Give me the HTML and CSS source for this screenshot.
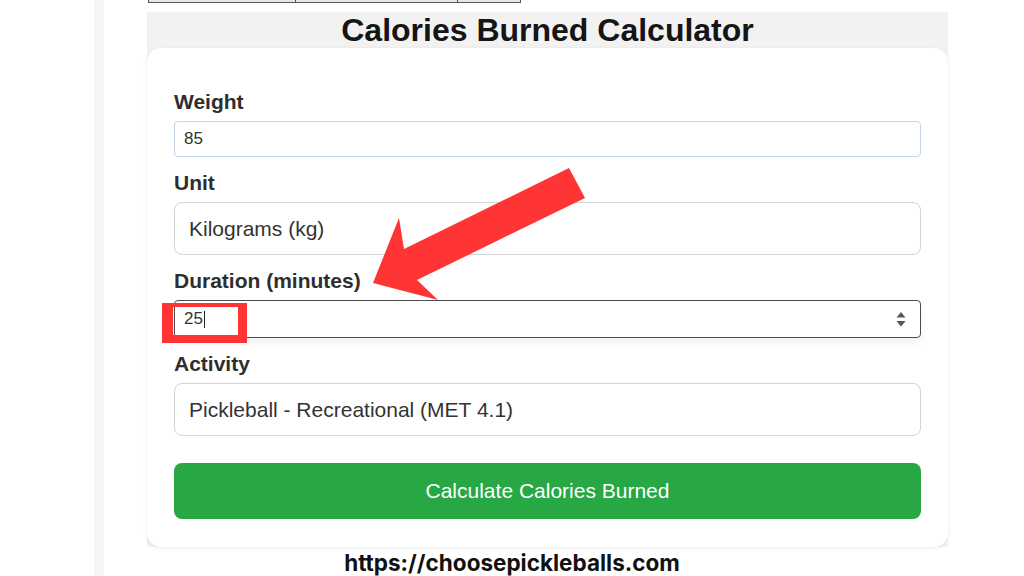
FILE: index.html
```html
<!DOCTYPE html>
<html lang="en">
<head>
<meta charset="utf-8">
<title>Calories Burned Calculator</title>
<link rel="stylesheet" href="styles.css">
</head>
<body>
  <div class="tabs">
    <span class="tab tab-a"></span>
    <span class="tab tab-b"></span>
    <span class="tab tab-c"></span>
  </div>

  <section class="panel">
    <h1 class="title">Calories Burned Calculator</h1>
    <form class="card">
      <div class="field">
        <label class="label">Weight</label>
        <div class="control control-weight">85</div>
      </div>
      <div class="field">
        <label class="label">Unit</label>
        <div class="control control-select">Kilograms (kg)</div>
      </div>
      <div class="field">
        <label class="label">Duration (minutes)</label>
        <div class="control control-focus">
          <span class="value">25</span><span class="caret"></span>
          <svg class="spinner" width="10" height="15" viewBox="0 0 10 15">
            <path d="M5 0 L9.5 5.5 L0.5 5.5 Z" fill="#555"/>
            <path d="M0.5 9 L9.5 9 L5 14.5 Z" fill="#555"/>
          </svg>
        </div>
      </div>
      <div class="field field-last">
        <label class="label">Activity</label>
        <div class="control control-select">Pickleball - Recreational (MET 4.1)</div>
      </div>
      <button class="submit" type="button">Calculate Calories Burned</button>
    </form>
  </section>

  <p class="site">https://choosepickleballs.com</p>

  <!-- annotation layer: pointer arrow and highlight box -->
  <svg class="marks" width="1024" height="576" viewBox="0 0 1024 576">
    <polygon fill="#ff3434" points="569,168 585,198 417,280 438,300 373,283 399,218 404,249"/>
    <path fill="#ff3434" fill-rule="evenodd" d="M162 303 H247 V343 H162 Z M173 307 V335 H238 V307 Z"/>
  </svg>
</body>
</html>
```

FILE: styles.css
```css
html, body {
  margin: 0;
  padding: 0;
}

body {
  width: 1024px;
  height: 576px;
  overflow: hidden;
  position: relative;
  font-family: "Liberation Sans", Arial, sans-serif;
  background: linear-gradient(to right, #fff 94px, #f6f6f6 94px, #f6f6f6 104px, #fff 104px);
}

/* cut-off tab strip at the very top */
.tabs {
  display: flex;
  margin-left: 148px;
  width: 373px;
  height: 3px;
  box-sizing: border-box;
  border: 1px solid #555;
  border-top: 0;
  background: #e6e6e6;
}

.tab { display: block; height: 100%; }
.tab-a { width: 146px; }
.tab-b { width: 161px; border-left: 1px solid #555; }
.tab-c { flex: 1; border-left: 1px solid #555; }

.panel {
  margin: 9px 0 0 147px;
  width: 801px;
  background: #f2f2f2;
}

.title {
  margin: 0;
  height: 36px;
  font-size: 32px;
  line-height: 36px;
  font-weight: 700;
  text-align: center;
  color: #151515;
}

.card {
  display: block;
  background: #fff;
  border-radius: 14px;
  padding: 42px 27px 28px;
  box-shadow: 0 1px 4px rgba(0, 0, 0, 0.08);
}

.field {
  margin-bottom: 14px;
}

.field-last {
  margin-bottom: 27px;
}

.label {
  display: block;
  font-size: 21px;
  line-height: 24px;
  font-weight: 700;
  color: #2e2e2e;
  margin-bottom: 7px;
}

.control {
  display: flex;
  align-items: center;
  box-sizing: border-box;
  width: 100%;
  color: #333;
  background: #fff;
}

.control-weight {
  height: 36px;
  border: 1px solid #c6d5e4;
  border-radius: 4px;
  padding-left: 9px;
  font-size: 17px;
}

.control-select {
  height: 53px;
  border: 1px solid #d3d3d3;
  border-radius: 8px;
  padding-left: 14px;
  font-size: 21px;
}

.control-focus {
  height: 38px;
  border: 1.5px solid #4d4d4d;
  border-radius: 4px;
  padding: 0 14px 0 9px;
  font-size: 17px;
  box-shadow: 0 5px 10px rgba(0, 0, 0, 0.05);
}

.caret {
  display: inline-block;
  width: 1px;
  height: 17px;
  margin-left: 1px;
  background: #222;
}

.spinner {
  margin-left: auto;
}

.submit {
  display: block;
  width: 100%;
  height: 56px;
  margin: 0;
  border: 0;
  border-radius: 8px;
  background: #28a745;
  color: #fff;
  font-family: "Liberation Sans", Arial, sans-serif;
  font-size: 21px;
}

.site {
  margin: 3px 0 0;
  text-align: center;
  font-family: Inter, "Liberation Sans", sans-serif;
  font-weight: 700;
  font-size: 22.5px;
  line-height: 26px;
  color: #111;
}

.marks {
  position: absolute;
  left: 0;
  top: 0;
  pointer-events: none;
}
```
